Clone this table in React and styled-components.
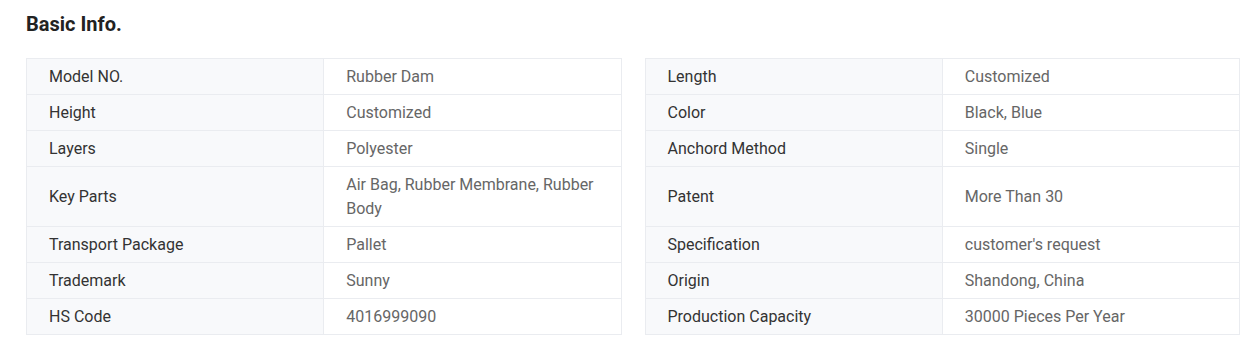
import styled, { createGlobalStyle } from "styled-components"

const GlobalStyle = createGlobalStyle`
  body {
    margin: 0;
    background: #fff;
    font-family: Roboto, "Liberation Sans", Arial, sans-serif;
  }
`

const Page = styled.section`
  padding: 12px 11px 0 26px;
`

const Title = styled.h2`
  margin: 0 0 22px;
  font-size: 20px;
  line-height: 24px;
  font-weight: 700;
  color: #222;
`

const Columns = styled.div`
  display: grid;
  grid-template-columns: 1fr 1fr;
  align-items: start;
  gap: 23px;
`

const Table = styled.table`
  width: 100%;
  border-collapse: collapse;
  table-layout: fixed;
  font-size: 16px;
  line-height: 24px;
`

const Row = styled.tr`
  height: ${({ $tall }) => ($tall ? "60px" : "36px")};
`

const Label = styled.th`
  text-align: left;
  font-weight: 400;
  color: #333;
  background: #f8f9fb;
  border: 1px solid #eaecf0;
  padding: 5px 22px;
`

const Value = styled.td`
  color: #666;
  background: #fff;
  border: 1px solid #eaecf0;
  padding: 5px 22px;
`

const left = [
  ["Model NO.", "Rubber Dam"],
  ["Height", "Customized"],
  ["Layers", "Polyester"],
  ["Key Parts", "Air Bag, Rubber Membrane, Rubber Body"],
  ["Transport Package", "Pallet"],
  ["Trademark", "Sunny"],
  ["HS Code", "4016999090"],
]

const right = [
  ["Length", "Customized"],
  ["Color", "Black, Blue"],
  ["Anchord Method", "Single"],
  ["Patent", "More Than 30"],
  ["Specification", "customer's request"],
  ["Origin", "Shandong, China"],
  ["Production Capacity", "30000 Pieces Per Year"],
]

function InfoTable({ rows }) {
  return (
    <Table>
      <tbody>
        {rows.map(([k, v], i) => (
          <Row key={k} $tall={i === 3}>
            <Label>{k}</Label>
            <Value>{v}</Value>
          </Row>
        ))}
      </tbody>
    </Table>
  )
}

export default function App() {
  return (
    <>
      <GlobalStyle />
      <Page>
        <Title>Basic Info.</Title>
        <Columns>
          <InfoTable rows={left} />
          <InfoTable rows={right} />
        </Columns>
      </Page>
    </>
  )
}
